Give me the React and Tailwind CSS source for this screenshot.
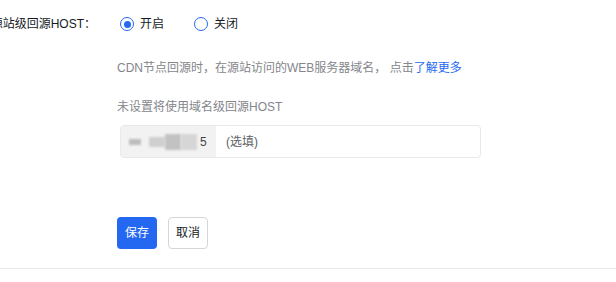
export default function App() {
  return (
    <div className="w-[616px] h-[282px] bg-white overflow-hidden text-[12px] text-[#151b26] relative" style={{ fontFamily: '"Liberation Sans", "Noto Sans CJK SC", sans-serif' }}>
      <div className="flex items-start pt-[16px]">
        <div className="w-[96px] shrink-0 flex justify-end whitespace-nowrap leading-[16px]">
          <span>源站级回源HOST：</span>
        </div>
        <div className="ml-[21px] flex flex-col">
          <div className="flex items-center h-[16px] ml-[3px]">
            <label className="flex items-center gap-[6px]">
              <span className="w-[14px] h-[14px] rounded-full border border-[#2468f2] flex items-center justify-center">
                <span className="w-[7px] h-[7px] rounded-full bg-[#2468f2]" />
              </span>
              <span>开启</span>
            </label>
            <label className="flex items-center gap-[6px] ml-[30px]">
              <span className="w-[14px] h-[14px] rounded-full border border-[#2468f2]" />
              <span>关闭</span>
            </label>
          </div>
          <div className="mt-[28px] text-[#84868c] leading-[16px]">
            CDN节点回源时，在源站访问的WEB服务器域名，&nbsp;点击<a className="text-[#2468f2]">了解更多</a>
          </div>
          <div className="mt-[23px] text-[#84868c] leading-[16px]">未设置将使用域名级回源HOST</div>
          <div className="mt-[10px] ml-[3px] w-[361px] h-[33px] rounded-[4px] border border-[#e8e9eb] flex items-center overflow-hidden">
            <div className="w-[95px] h-full bg-[#f2f2f2] flex items-center pl-[8px] shrink-0">
              <span className="w-[12px] h-[6px] bg-[#bdbdbd] blur-[1px]" />
              <span className="w-[16px] h-[10px] bg-[#cfcfcf] blur-[1px] ml-[8px]" />
              <span className="w-[16px] h-[16px] bg-[#c2c2c2] blur-[1px]" />
              <span className="w-[16px] h-[16px] bg-[#d6d6d6] blur-[1px]" />
              <span className="text-[#444] ml-[3px]">5</span>
            </div>
            <span className="ml-[10px] text-[#5c5f66]">(选填)</span>
          </div>
          <div className="mt-[59px] flex gap-[11px]">
            <button className="w-[40px] h-[32px] rounded-[4px] bg-[#2468f2] text-white text-[12px]">保存</button>
            <button className="w-[40px] h-[32px] rounded-[4px] border border-[#d4d6d9] bg-white text-[#151b26] text-[12px]">取消</button>
          </div>
        </div>
      </div>
      <div className="mt-[19px] h-px bg-[#e8e9eb]" />
    </div>
  );
}
